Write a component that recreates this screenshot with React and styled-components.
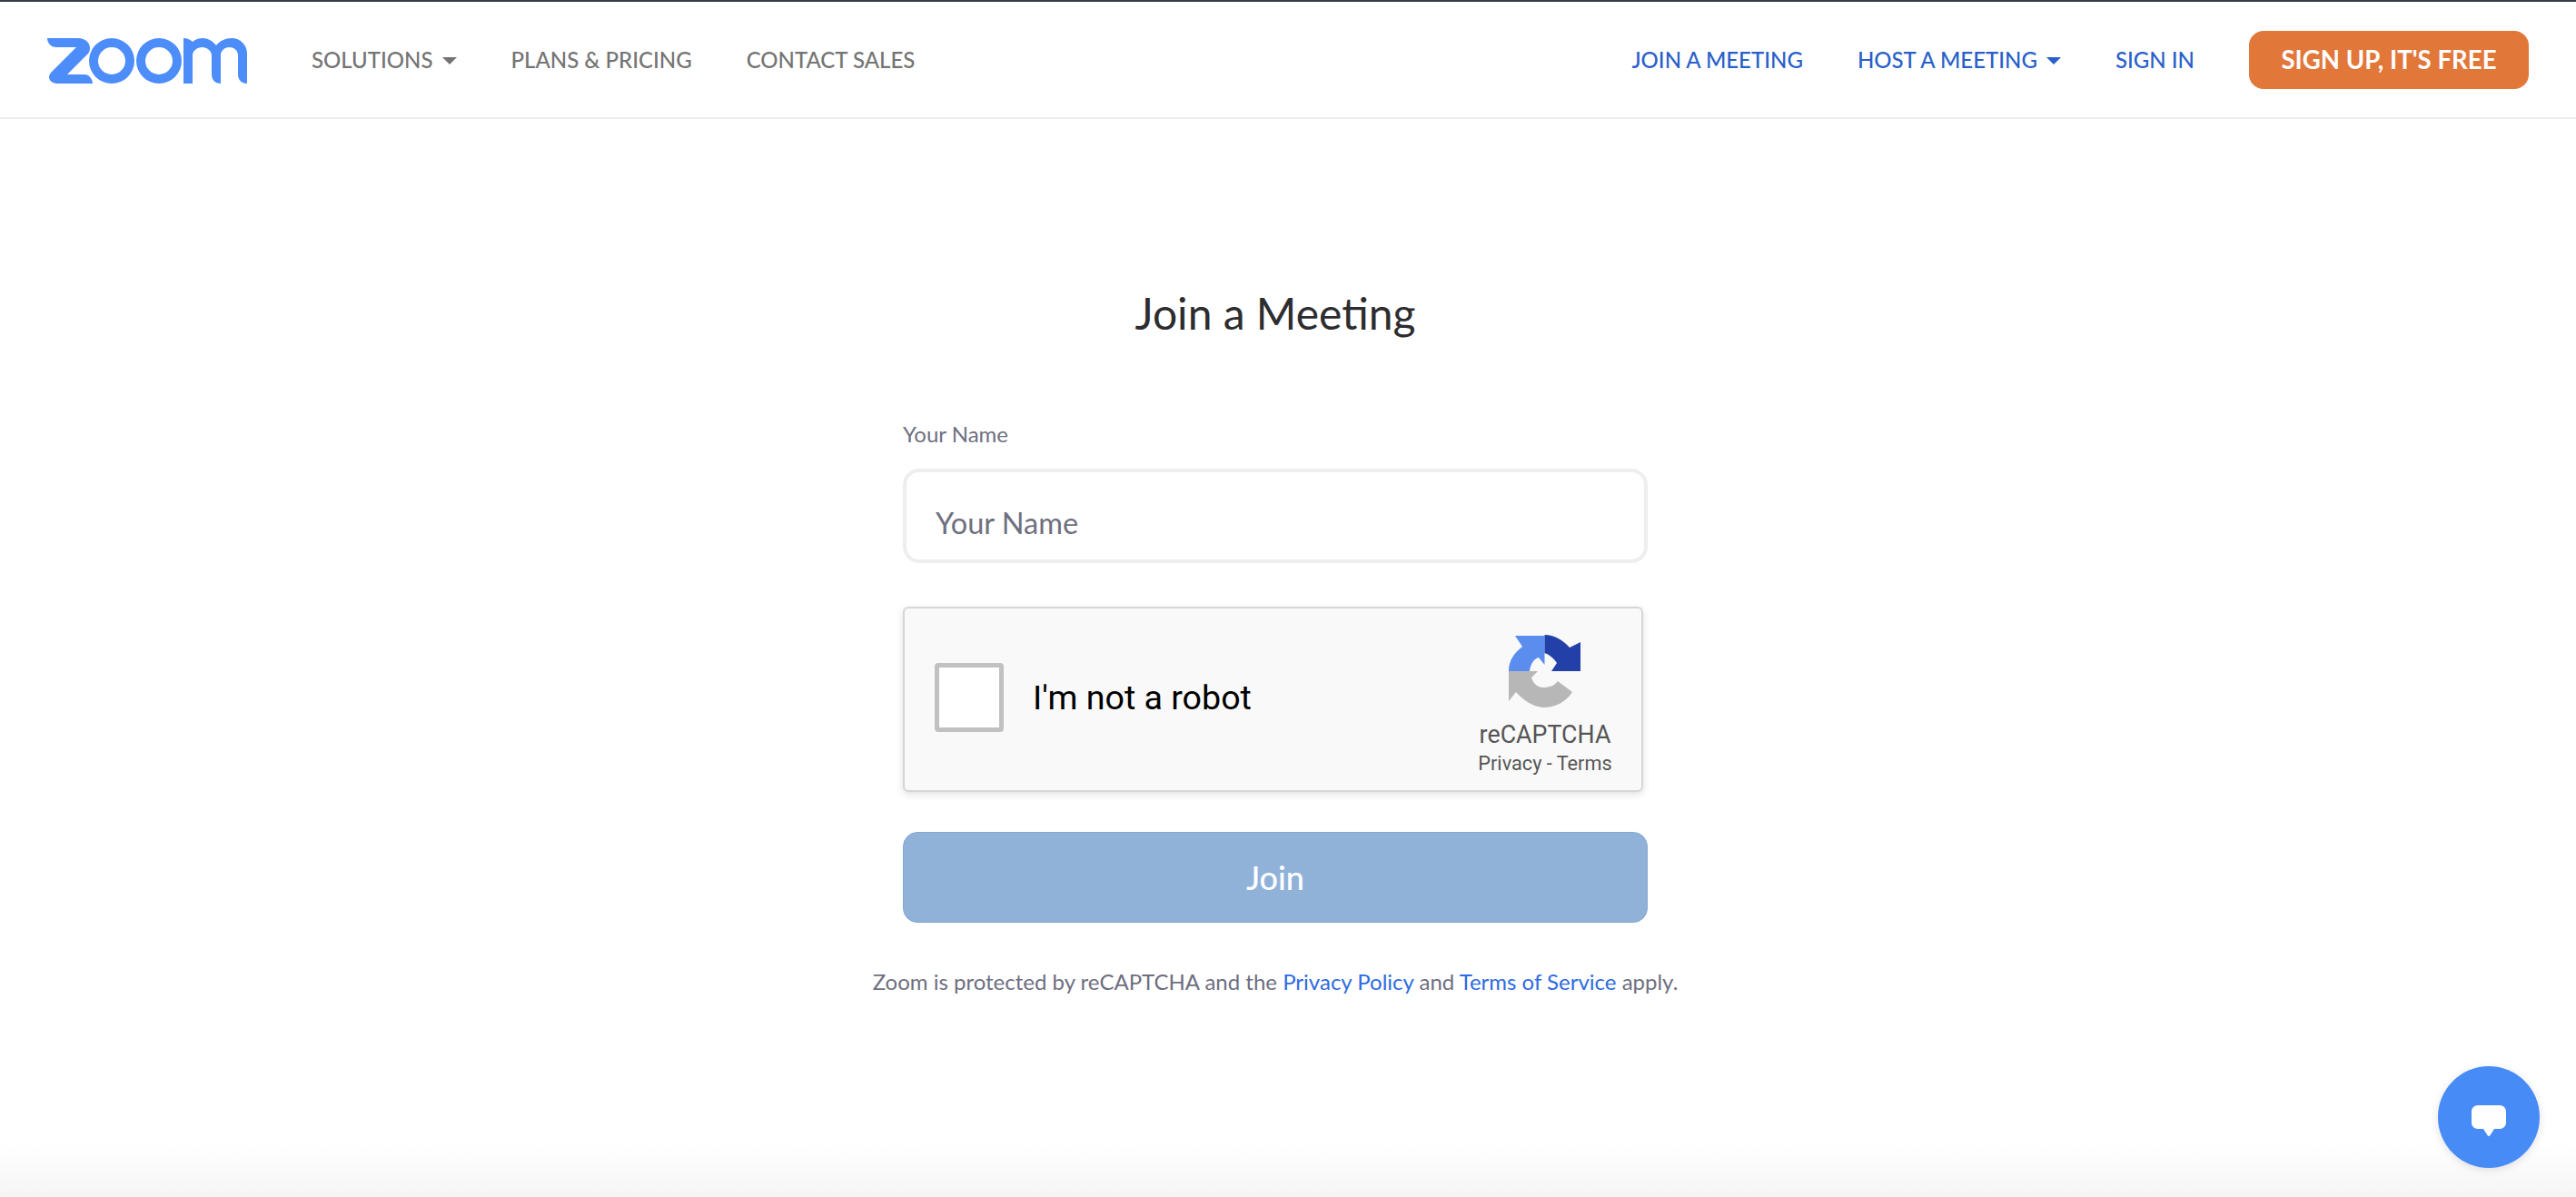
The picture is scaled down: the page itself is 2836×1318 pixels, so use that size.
import React from "react";
import styled, { createGlobalStyle } from "styled-components";

const Global = createGlobalStyle`
  html, body { margin: 0; padding: 0; background: #fff; }
  body { font-family: Lato, "Open Sans", sans-serif; }
  * { box-sizing: border-box; }
`;

const Page = styled.div`
  min-height: 1318px;
  height: 1318px;
  overflow: hidden;
  display: flex;
  flex-direction: column;
  position: relative;
  border-top: 2px solid #383a4a;
`;

const Header = styled.header`
  height: 129px;
  flex: none;
  display: flex;
  align-items: center;
  justify-content: space-between;
  padding: 0 52px;
  border-bottom: 2px solid #eeeeee;
`;

const NavGroup = styled.nav`
  display: flex;
  align-items: center;
  gap: ${(p) => p.$gap}px;
`;

const LogoMark = styled.svg`
  width: 220px;
  height: 50px;
  margin-right: 11px;
  margin-top: 2px;
  display: block;
`;

const NavLink = styled.a`
  display: flex;
  align-items: center;
  gap: 10px;
  font-size: 24px;
  font-weight: 500;
  white-space: nowrap;
  margin-top: -1px;
  color: ${(p) => (p.$blue ? "#2a5fc9" : "#747474")};
`;

const Caret = styled.span`
  width: 0;
  height: 0;
  margin-top: 4px;
  border-left: 8px solid transparent;
  border-right: 8px solid transparent;
  border-top: 8px solid currentColor;
`;

const SignUp = styled.a`
  width: 308px;
  height: 64px;
  display: flex;
  align-items: center;
  justify-content: center;
  background: #e2773a;
  border-radius: 16px;
  color: #fff;
  font-size: 27.6px;
  font-weight: 700;
  white-space: nowrap;
`;

const Main = styled.main`
  flex: 1;
  display: flex;
  flex-direction: column;
  align-items: center;
  padding: 184px 28px 0 0;
`;

const Title = styled.h1`
  margin: 0 0 88px;
  font-size: 48px;
  line-height: 60px;
  font-weight: 400;
  color: #2d2d30;
`;

const Form = styled.form`
  width: 820px;
  display: flex;
  flex-direction: column;
`;

const Label = styled.label`
  font-size: 24px;
  line-height: 30px;
  color: #6e7080;
  margin-bottom: 23px;
`;

const NameInput = styled.input`
  width: 100%;
  height: 104px;
  border: 4px solid #eeeeee;
  border-radius: 18px;
  padding: 14px 32px 0;
  margin-bottom: 48px;
  font-family: Lato, sans-serif;
  font-size: 32.5px;
  outline: none;
  &::placeholder { color: #6e7080; opacity: 1; }
`;

const Captcha = styled.div`
  width: 815px;
  height: 204px;
  margin-bottom: 44px;
  display: flex;
  align-items: center;
  background: #f9f9f9;
  border: 2px solid #d6d6d6;
  border-radius: 6px;
  box-shadow: 0 3px 8px rgba(0, 0, 0, 0.12);
  padding: 0 33px 0 33px;
  font-family: Roboto, sans-serif;
`;

const CheckBox = styled.span`
  width: 76px;
  height: 76px;
  flex: none;
  margin-top: -4px;
  background: #fff;
  border: 5px solid #c1c1c1;
  border-radius: 4px;
`;

const CaptchaText = styled.span`
  margin-left: 32px;
  margin-top: -5px;
  flex: 1;
  font-size: 37.6px;
  color: #000;
`;

const CaptchaBrand = styled.div`
  width: 146px;
  display: flex;
  flex-direction: column;
  align-items: center;
  margin-top: 16px;
`;

const CaptchaMark = styled.svg`
  width: 80px;
  height: 80px;
  display: block;
`;

const CaptchaName = styled.span`
  margin-top: 14px;
  font-size: 26.8px;
  line-height: 32px;
  color: #555;
`;

const CaptchaLinks = styled.span`
  font-size: 21.7px;
  line-height: 32px;
  color: #555;
  white-space: nowrap;
`;

const JoinButton = styled.button`
  width: 100%;
  height: 100px;
  margin-bottom: 47px;
  border: 1px solid #84a8d2;
  border-radius: 16px;
  background: #90b2d9;
  color: #fff;
  font-family: Lato, sans-serif;
  font-size: 36px;
  font-weight: 500;
`;

const Legal = styled.p`
  margin: 0;
  width: 900px;
  margin-left: -40px;
  text-align: center;
  font-size: 24px;
  line-height: 36px;
  color: #6e6e80;
  white-space: nowrap;
`;

const LegalLink = styled.a`
  color: #2d6be0;
`;

const BottomShade = styled.div`
  position: absolute;
  left: 0;
  right: 0;
  bottom: 0;
  height: 60px;
  background: linear-gradient(to bottom, #ffffff, #f5f5f5);
`;

const ChatBubble = styled.button`
  position: absolute;
  left: 2684px;
  top: 1172px;
  width: 112px;
  height: 112px;
  padding: 0;
  border: 0;
  border-radius: 50%;
  background: #478bf6;
  box-shadow: 0 2px 10px rgba(0, 0, 0, 0.12);
  display: flex;
  align-items: center;
  justify-content: center;
`;

const ChatIcon = styled.svg`
  width: 38px;
  height: 34px;
  margin-top: 7px;
  display: block;
`;

export default function App() {
  return (
    <Page>
      <Global />
      <Header>
        <NavGroup $gap={60}>
          <LogoMark viewBox="0 0 220 50" aria-label="zoom">
            <g fill="#4c8dfa">
              <path d="M0 0H34C42 0 47 5 47 11C47 14 46 16 44 18L22 40H41C46 40 50 45 50 50H11C5 50 2 46 2 43C2 41 3 39 4 38L32 10H10C4 10 0 5 0 0Z" />
              <path fillRule="evenodd" d="M71 0a25 25 0 1 0 0 50a25 25 0 1 0 0-50ZM71 10a15 15 0 1 1 0 30a15 15 0 1 1 0-30Z" />
              <path fillRule="evenodd" d="M123 0a25 25 0 1 0 0 50a25 25 0 1 0 0-50ZM123 10a15 15 0 1 1 0 30a15 15 0 1 1 0-30Z" />
              <path d="M150 0C154 0 157 1.5 160 4C163 1.5 167 0 171 0C177 0 182 3 186 8C190 3 196 0 203 0C212.5 0 220 7.5 220 17V50C214 50 210 46 210 40V19C210 14 206 10 200.5 10C195 10 191 14 191 19V50C185 50 181 46 181 40V19C181 14 176 10 170.5 10C165 10 160 14 160 19V50H150Z" />
            </g>
          </LogoMark>
          <NavLink>SOLUTIONS<Caret /></NavLink>
          <NavLink>PLANS &amp; PRICING</NavLink>
          <NavLink>CONTACT SALES</NavLink>
        </NavGroup>
        <NavGroup $gap={60}>
          <NavLink $blue>JOIN A MEETING</NavLink>
          <NavLink $blue>HOST A MEETING<Caret /></NavLink>
          <NavLink $blue>SIGN IN</NavLink>
          <SignUp>SIGN UP, IT'S FREE</SignUp>
        </NavGroup>
      </Header>
      <Main>
        <Title>Join a Meeting</Title>
        <Form>
          <Label>Your Name</Label>
          <NameInput placeholder="Your Name" />
          <Captcha>
            <CheckBox />
            <CaptchaText>I'm not a robot</CaptchaText>
            <CaptchaBrand>
              <CaptchaMark viewBox="0 0 80 80">
                <path fill="#5b8def" d="M7 1H39.500V33L33 25C28 26 24 32 23 40H0C0 28 6 20 15 13Z" />
                <path fill="#2340a8" d="M39.500 0C50 0 60 6 67 14L79 8V40H47L53 31C50 26 45 22 39.500 20Z" />
                <path fill="#b7b7b7" d="M0 40H32L25 47C27 54 32 58 38 58C45 58 50 56 54 51L70 63C63 74 51 80 38 80C26 79 16 72 8 63L0 73Z" />
              </CaptchaMark>
              <CaptchaName>reCAPTCHA</CaptchaName>
              <CaptchaLinks>Privacy - Terms</CaptchaLinks>
            </CaptchaBrand>
          </Captcha>
          <JoinButton type="button">Join</JoinButton>
          <Legal>
            Zoom is protected by reCAPTCHA and the <LegalLink>Privacy Policy</LegalLink> and <LegalLink>Terms of Service</LegalLink> apply.
          </Legal>
        </Form>
      </Main>
      <BottomShade />
      <ChatBubble aria-label="chat">
        <ChatIcon viewBox="0 0 38 34">
          <path fill="#fff" d="M7 0H31C35 0 38 3 38 7V19C38 23 35 26 31 26H25L20.500 33C19.700 34.200 18.300 34.200 17.500 33L13 26H7C3 26 0 23 0 19V7C0 3 3 0 7 0Z" />
        </ChatIcon>
      </ChatBubble>
    </Page>
  );
}
